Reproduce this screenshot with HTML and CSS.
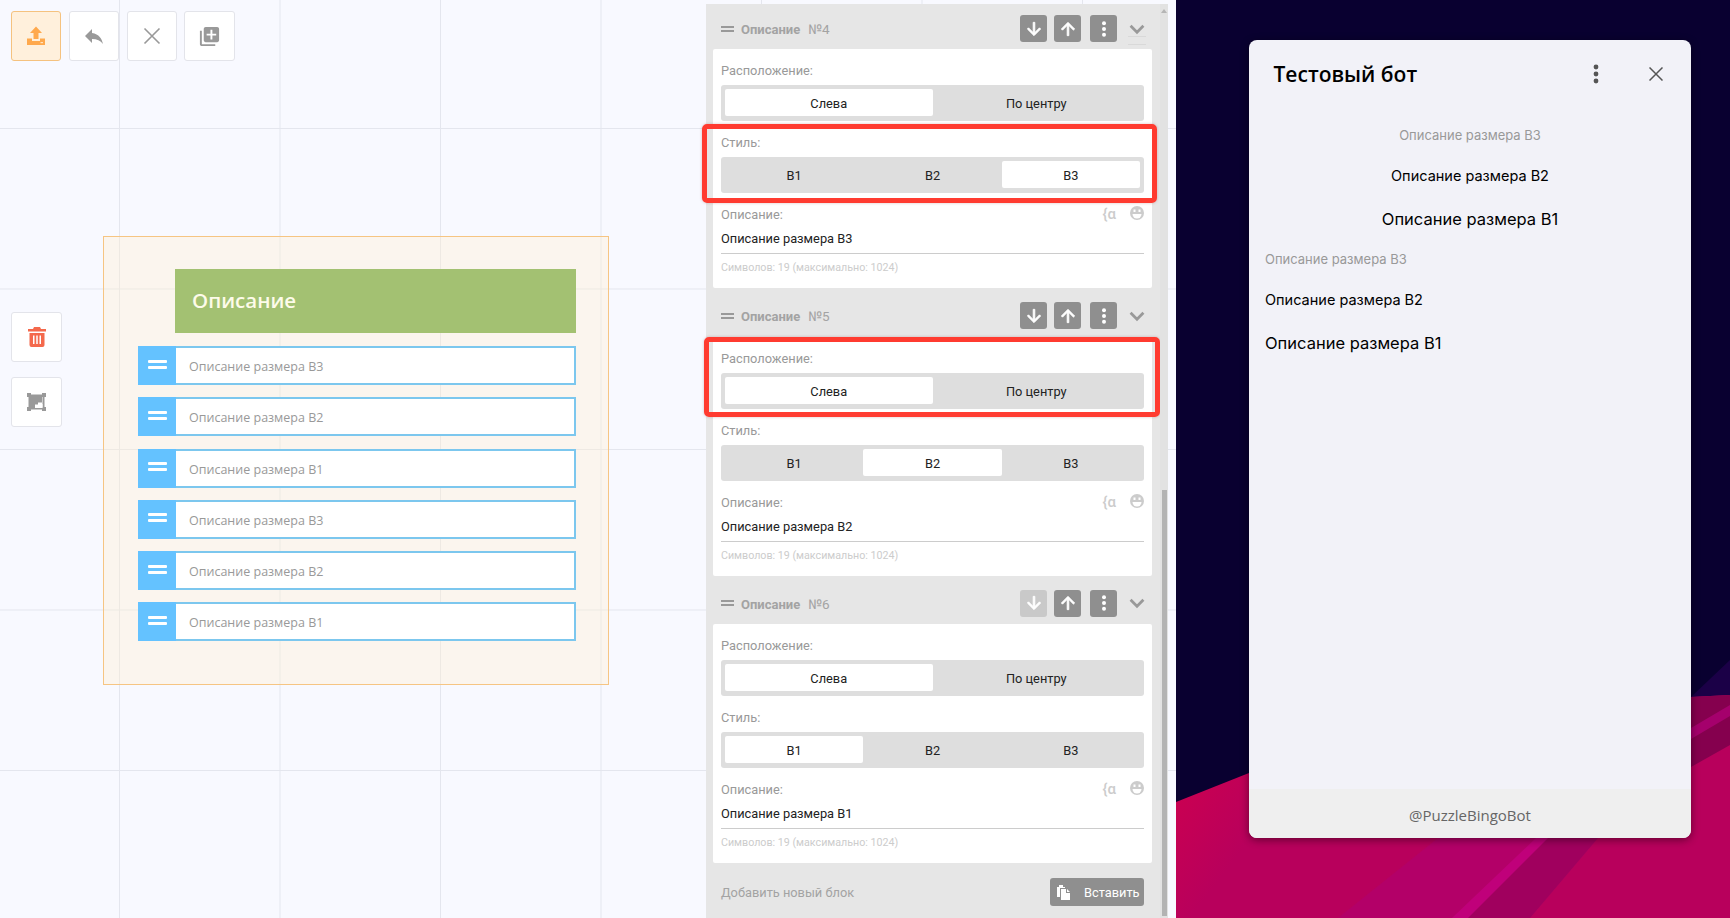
FILE: index.html
```html
<!DOCTYPE html>
<html lang="ru">
<head>
    <meta charset="UTF-8">
    <title>Тестовый бот</title>
    <link rel="stylesheet" href="styles.css">
</head>
<body>
    <div class="canvas">
        <div class="stage">
            <div class="toolbar">
                <button class="tool tool-active">
                    <svg width="20" height="20" viewBox="0 0 20 20"><path fill="#ffa94d" d="M10 0.500 16 7h-3.500v6h-5V7H4z"/><path fill="#ffa94d" d="M1 12.500h5V15h8v-2.500h5V19H1z"/><rect x="14.500" y="16" width="2.500" height="1.200" fill="#ffe3c2"/></svg>
                </button>
                <button class="tool">
                    <svg width="24" height="24" viewBox="0 0 24 24"><path fill="#999" d="M10 9V5l-7 7 7 7v-4.100c5 0 8.500 1.600 11 5.100-1-5-4-10-11-11z"/></svg>
                </button>
                <button class="tool">
                    <svg width="18" height="18" viewBox="0 0 18 18"><path stroke="#999" stroke-width="1.600" fill="none" d="M1.500 1.500l15 15M16.500 1.500l-15 15"/></svg>
                </button>
                <button class="tool tool-wide">
                    <svg width="23" height="23" viewBox="0 0 24 24"><path fill="#999" d="M4 6H2v14c0 1.100.9 2 2 2h14v-2H4V6zm16-4H8c-1.100 0-2 .9-2 2v12c0 1.100.9 2 2 2h12c1.100 0 2-.9 2-2V4c0-1.100-.9-2-2-2zm-1 9h-4v4h-2v-4H9V9h4V5h2v4h4v2z"/></svg>
                </button>
            </div>
            <div class="side-tools">
                <button class="tool">
                    <svg width="18" height="20" viewBox="0 0 18 20"><path fill="#f4694c" fill-rule="evenodd" d="M6 0h6l1 2h5v2.500H0V2h5zM1.500 6h15v12a2 2 0 0 1-2 2h-11a2 2 0 0 1-2-2zM5 8.500v8.500h1.500V8.500zM8.250 8.500v8.500h1.500V8.500zM11.500 8.500v8.500H13V8.500z"/></svg>
                </button>
                <button class="tool">
                    <svg width="19" height="18" viewBox="0 0 19 18"><path fill="#999" fill-rule="evenodd" d="M0 0h4v1.500h11V0h4v4h-1.500v10H19v4h-4v-1.500H4V18H0v-4h1.500V4H0zM11 9.500v2H8V15h7.500V4H15v5.500z"/><path fill="#fff" d="M9.500 12.500h4V11h2v3.500h-6z"/></svg>
                </button>
            </div>

            <div class="frame">
                <div class="frame-title">Описание</div>
                <div class="frame-rows">
                    <div class="frame-row"><span class="frame-handle"><i></i><i></i></span><span class="frame-text">Описание размера В3</span></div>
                    <div class="frame-row"><span class="frame-handle"><i></i><i></i></span><span class="frame-text">Описание размера В2</span></div>
                    <div class="frame-row"><span class="frame-handle"><i></i><i></i></span><span class="frame-text">Описание размера В1</span></div>
                    <div class="frame-row"><span class="frame-handle"><i></i><i></i></span><span class="frame-text">Описание размера В3</span></div>
                    <div class="frame-row"><span class="frame-handle"><i></i><i></i></span><span class="frame-text">Описание размера В2</span></div>
                    <div class="frame-row"><span class="frame-handle"><i></i><i></i></span><span class="frame-text">Описание размера В1</span></div>
                </div>
            </div>
        </div>

        <div class="panel">
            <div class="panel-list">
                <div class="block block-first">
                    <div class="block-head">
                        <span class="drag"><i></i><i></i></span>
                        <span class="block-name">Описание</span>
                        <span class="block-num">№4</span>
                        <span class="head-btn"><svg width="20" height="20" viewBox="0 0 24 24"><use href="#arrow-down"/></svg></span>
                        <span class="head-btn"><svg width="20" height="20" viewBox="0 0 24 24"><use href="#arrow-up"/></svg></span>
                        <span class="head-btn head-btn-more"><svg width="20" height="20" viewBox="0 0 24 24"><use href="#dots"/></svg></span>
                        <span class="chevron chevron-marked"><svg width="22" height="22" viewBox="0 0 24 24"><use href="#chevron"/></svg></span>
                    </div>
                    <div class="card">
                        <div class="section">
                            <div class="label">Расположение:</div>
                            <div class="seg"><span class="seg-item seg-on">Слева</span><span class="seg-item">По центру</span></div>
                        </div>
                        <div class="section">
                            <div class="mark mark-style"></div>
                            <div class="label">Стиль:</div>
                            <div class="seg"><span class="seg-item">В1</span><span class="seg-item">В2</span><span class="seg-item seg-on">В3</span></div>
                        </div>
                        <div class="section">
                            <div class="label-row">
                                <span class="label">Описание:</span>
                                <span class="var-icon">{α</span>
                                <svg class="smile" width="14" height="14" viewBox="0 0 14 14"><use href="#smile"/></svg>
                            </div>
                            <div class="field">Описание размера В3</div>
                            <div class="count">Символов: 19 (максимально: 1024)</div>
                        </div>
                    </div>
                </div>

                <div class="block">
                    <div class="block-head">
                        <span class="drag"><i></i><i></i></span>
                        <span class="block-name">Описание</span>
                        <span class="block-num">№5</span>
                        <span class="head-btn"><svg width="20" height="20" viewBox="0 0 24 24"><use href="#arrow-down"/></svg></span>
                        <span class="head-btn"><svg width="20" height="20" viewBox="0 0 24 24"><use href="#arrow-up"/></svg></span>
                        <span class="head-btn head-btn-more"><svg width="20" height="20" viewBox="0 0 24 24"><use href="#dots"/></svg></span>
                        <span class="chevron"><svg width="22" height="22" viewBox="0 0 24 24"><use href="#chevron"/></svg></span>
                    </div>
                    <div class="card">
                        <div class="section">
                            <div class="mark mark-place"></div>
                            <div class="label">Расположение:</div>
                            <div class="seg"><span class="seg-item seg-on">Слева</span><span class="seg-item">По центру</span></div>
                        </div>
                        <div class="section">
                            <div class="label">Стиль:</div>
                            <div class="seg"><span class="seg-item">В1</span><span class="seg-item seg-on">В2</span><span class="seg-item">В3</span></div>
                        </div>
                        <div class="section">
                            <div class="label-row">
                                <span class="label">Описание:</span>
                                <span class="var-icon">{α</span>
                                <svg class="smile" width="14" height="14" viewBox="0 0 14 14"><use href="#smile"/></svg>
                            </div>
                            <div class="field">Описание размера В2</div>
                            <div class="count">Символов: 19 (максимально: 1024)</div>
                        </div>
                    </div>
                </div>

                <div class="block">
                    <div class="block-head">
                        <span class="drag"><i></i><i></i></span>
                        <span class="block-name">Описание</span>
                        <span class="block-num">№6</span>
                        <span class="head-btn head-btn-off"><svg width="20" height="20" viewBox="0 0 24 24"><use href="#arrow-down"/></svg></span>
                        <span class="head-btn"><svg width="20" height="20" viewBox="0 0 24 24"><use href="#arrow-up"/></svg></span>
                        <span class="head-btn head-btn-more"><svg width="20" height="20" viewBox="0 0 24 24"><use href="#dots"/></svg></span>
                        <span class="chevron"><svg width="22" height="22" viewBox="0 0 24 24"><use href="#chevron"/></svg></span>
                    </div>
                    <div class="card">
                        <div class="section">
                            <div class="label">Расположение:</div>
                            <div class="seg"><span class="seg-item seg-on">Слева</span><span class="seg-item">По центру</span></div>
                        </div>
                        <div class="section">
                            <div class="label">Стиль:</div>
                            <div class="seg"><span class="seg-item seg-on">В1</span><span class="seg-item">В2</span><span class="seg-item">В3</span></div>
                        </div>
                        <div class="section">
                            <div class="label-row">
                                <span class="label">Описание:</span>
                                <span class="var-icon">{α</span>
                                <svg class="smile" width="14" height="14" viewBox="0 0 14 14"><use href="#smile"/></svg>
                            </div>
                            <div class="field">Описание размера В1</div>
                            <div class="count">Символов: 19 (максимально: 1024)</div>
                        </div>
                    </div>
                </div>

                <div class="panel-foot">
                    <span class="add-label">Добавить новый блок</span>
                    <button class="paste">
                        <svg width="14" height="15" viewBox="0 0 14 15"><path fill="#fff" d="M0 2h2V0h4v2h2v1H3v9H0z"/><path fill="#fff" d="M4 4h5v4h4v7H4zM10 4l3 3h-3z"/></svg>
                        Вставить
                    </button>
                </div>
            </div>
            <div class="scrollbar">
                <span class="scroll-arrow"></span>
                <span class="scroll-thumb"></span>
            </div>
        </div>
    </div>

    <div class="preview">
        <svg class="wallpaper" viewBox="1176 0 554 918" width="554" height="918">
            <defs>
                <linearGradient id="pink" x1="0" y1="0" x2="1" y2="0.300">
                    <stop offset="0" stop-color="#d6004a"/>
                    <stop offset="0.300" stop-color="#b8005c"/>
                    <stop offset="1" stop-color="#b8005c"/>
                </linearGradient>
            </defs>
            <rect x="1176" y="0" width="554" height="918" fill="#090030"/>
            <polygon points="1691,697 1730,660 1730,700" fill="#1b0047"/>
            <polygon points="1176,802 1249,773 1691,697 1730,695 1730,918 1176,918" fill="url(#pink)"/>
            <polygon points="1691,697 1730,695 1730,745 1691,767" fill="#85004e"/>
            <polygon points="1691,728 1730,705 1730,716 1691,739" fill="#a5006c"/>
            <polygon points="1438,838 1598,838 1530,918 1338,918" fill="#b30068"/>
            <polygon points="1545,838 1598,838 1530,918 1456,918" fill="#a0005e"/>
            <polygon points="1536,838 1548,838 1468,918 1452,918" fill="#c0007a"/>
        </svg>
        <div class="phone">
            <div class="phone-head">
                <span class="phone-title">Тестовый бот</span>
                <svg class="phone-dots" width="6" height="20" viewBox="0 0 6 20"><circle cx="3" cy="3" r="2.400" fill="#555"/><circle cx="3" cy="10" r="2.400" fill="#555"/><circle cx="3" cy="17" r="2.400" fill="#555"/></svg>
                <svg class="phone-close" width="14" height="14" viewBox="0 0 14 14"><path stroke="#555" stroke-width="1.500" fill="none" d="M0.500 0.500l13 13M13.500 0.500l-13 13"/></svg>
            </div>
            <div class="phone-body">
                <div class="msg msg-b3 msg-center">Описание размера В3</div>
                <div class="msg msg-b2 msg-center">Описание размера В2</div>
                <div class="msg msg-b1 msg-center">Описание размера В1</div>
                <div class="msg msg-b3">Описание размера В3</div>
                <div class="msg msg-b2">Описание размера В2</div>
                <div class="msg msg-b1">Описание размера В1</div>
            </div>
            <div class="phone-foot">@PuzzleBingoBot</div>
        </div>
    </div>

    <svg class="icon-defs" width="0" height="0">
        <defs>
            <path id="arrow-down" fill="#fff" stroke="#fff" stroke-width="1" d="M20 12l-1.410-1.410L13 16.170V4h-2v12.170l-5.580-5.590L4 12l8 8 8-8z"/>
            <path id="arrow-up" fill="#fff" stroke="#fff" stroke-width="1" d="M4 12l1.410 1.410L11 7.830V20h2V7.830l5.580 5.590L20 12l-8-8-8 8z"/>
            <g id="dots" fill="#fff"><circle cx="12" cy="5" r="2.400"/><circle cx="12" cy="12" r="2.400"/><circle cx="12" cy="19" r="2.400"/></g>
            <path id="chevron" fill="none" stroke="#999" stroke-width="3" d="M5 8.500l7 7 7-7"/>
            <g id="smile"><circle cx="7" cy="7" r="7" fill="#ccc"/><rect x="3.500" y="3.500" width="2" height="2.500" fill="#fff"/><rect x="8.500" y="3.500" width="2" height="2.500" fill="#fff"/><path fill="#fff" d="M2.500 8h9a4.500 4.500 0 0 1-9 0z"/></g>
        </defs>
    </svg>
</body>
</html>
```

FILE: styles.css
```css
* {
    box-sizing: border-box;
}
body {
    margin: 0;
    width: 1730px;
    height: 918px;
    overflow: hidden;
    display: flex;
    font-family: Roboto, "Open Sans", sans-serif;
    background-color: #f8f9ff;
}
button {
    font-family: inherit;
    padding: 0;
    cursor: pointer;
}
.icon-defs {
    position: absolute;
}

/* рабочая область с сеткой */
.canvas {
    width: 1176px;
    height: 918px;
    display: flex;
    background-color: #f8f9ff;
    background-image:
        linear-gradient(to right, #e4e6ee 1px, transparent 1px),
        linear-gradient(to bottom, #e4e6ee 1px, transparent 1px);
    background-size: 160.5px 160.5px;
    background-position: 119px 128px;
}
.stage {
    width: 706px;
    position: relative;
    padding: 11px 0 0 11px;
}
.toolbar {
    display: flex;
    gap: 8px;
}
.tool {
    width: 50px;
    height: 50px;
    display: flex;
    align-items: center;
    justify-content: center;
    background: #fff;
    border: 1px solid #e3e4ea;
    border-radius: 3px;
}
.tool-wide {
    width: 51px;
    margin-left: -1px;
}
.tool-active {
    background: #fff0dc;
    border-color: #f5c27f;
}
.side-tools {
    margin-top: 251px;
    display: flex;
    flex-direction: column;
    gap: 15px;
}
.side-tools .tool {
    width: 51px;
}

/* блок на холсте */
.frame {
    position: absolute;
    left: 103px;
    top: 236px;
    width: 506px;
    height: 449px;
    padding: 32px 32px 0 34px;
    border: 1px solid #f6c583;
    background: rgba(255, 240, 210, 0.38);
}
.frame-title {
    margin-left: 37px;
    height: 64px;
    padding: 0 0 3px 17px;
    display: flex;
    align-items: center;
    background: #a3c172;
    color: #fdfbe9;
    font-family: "Open Sans", sans-serif;
    font-size: 20.500px;
    font-weight: 600;
}
.frame-rows {
    margin-top: 13px;
    display: flex;
    flex-direction: column;
    gap: 12.3px;
}
.frame-row {
    height: 39px;
    display: flex;
    align-items: stretch;
    background: #fff;
    border: 2px solid #7cc7ee;
    border-left: 0;
}
.frame-handle {
    width: 38px;
    margin: -2px 0;
    display: flex;
    flex-direction: column;
    align-items: center;
    justify-content: center;
    gap: 3px;
    padding-bottom: 3px;
    background: #64c2ff;
}
.frame-handle i {
    width: 19px;
    height: 3px;
    background: #fff;
    border-radius: 1px;
}
.frame-text {
    padding: 2px 0 0 13px;
    align-self: center;
    font-family: "Open Sans", sans-serif;
    font-size: 12.5px;
    color: #999;
}

/* панель настроек */
.panel {
    width: 462px;
    height: 914px;
    margin-top: 4px;
    display: flex;
    background: #e6e6e6;
}
.panel-list {
    width: 454px;
    padding: 0 8px 0 7px;
}
.block-head {
    height: 48.7px;
    padding: 14px 0 0 8px;
    display: flex;
    align-items: flex-start;
}
.block-first .block-head {
    height: 45px;
    padding-top: 11px;
}
.drag {
    width: 13px;
    height: 27px;
    display: flex;
    flex-direction: column;
    justify-content: center;
    gap: 2px;
}
.drag i {
    height: 2px;
    background: #999;
}
.block-name {
    margin-left: 7px;
    line-height: 29px;
    font-size: 13px;
    font-weight: 700;
    color: #a3a3a3;
}
.block-num {
    margin-left: 8px;
    margin-right: auto;
    line-height: 29px;
    font-size: 13.500px;
    color: #a3a3a3;
}
.head-btn {
    width: 27px;
    height: 27px;
    margin-left: 7px;
    display: flex;
    align-items: center;
    justify-content: center;
    background: #8f8f8f;
    border-radius: 3px;
}
.head-btn-more {
    margin-left: 9px;
}
.head-btn-off {
    background: #c9c9c9;
}
.chevron {
    width: 22px;
    height: 27px;
    margin: 0 4px 0 9px;
    display: flex;
    align-items: center;
    justify-content: center;
    position: relative;
}
.chevron-marked::after {
    content: "";
    position: absolute;
    left: 2px;
    right: 2px;
    top: 21px;
    height: 7px;
    border-top: 1px solid #d9d9d9;
    border-bottom: 1px solid #d9d9d9;
}
.card {
    height: 239px;
    padding: 0 8px;
    background: #fff;
    border-radius: 2px;
}
.section {
    position: relative;
    padding-top: 12px;
}
.label {
    height: 18px;
    margin-bottom: 6px;
    line-height: 20px;
    font-size: 12.8px;
    color: #999;
}
.seg {
    height: 36px;
    padding: 4px;
    display: flex;
    background: #dedede;
    border-radius: 3px;
}
.seg-item {
    flex: 1;
    height: 27px;
    line-height: 29px;
    text-align: center;
    font-size: 12.8px;
    color: #222;
    border-radius: 2px;
}
.seg-on {
    background: #fff;
}
.mark {
    position: absolute;
    top: 3px;
    left: -19px;
    right: -13px;
    height: 79px;
    border: 5px solid #ff3b30;
    border-radius: 5px;
    box-shadow: 0 0 3px rgba(120, 0, 0, 0.25);
}
.mark-place {
    top: 0;
    left: -17px;
    right: -16px;
    height: 80px;
}
.label-row {
    height: 18px;
    display: flex;
    align-items: center;
}
.label-row .label {
    margin-bottom: 0;
    margin-right: auto;
}
.var-icon {
    margin-right: 14px;
    font-size: 15px;
    font-weight: 500;
    color: #ccc;
}
.smile {
    margin-top: -2px;
}
.field {
    height: 26px;
    margin-top: 5px;
    padding-bottom: 5px;
    line-height: 22px;
    font-size: 12.8px;
    color: #222;
    border-bottom: 1px solid #ccc;
}
.count {
    margin-top: 7px;
    line-height: 14px;
    font-size: 10.7px;
    color: #ccc;
}
.panel-foot {
    height: 50px;
    padding: 15px 0 0 8px;
    display: flex;
    align-items: flex-start;
    justify-content: space-between;
}
.add-label {
    line-height: 29px;
    font-size: 12.8px;
    color: #a3a3a3;
}
.paste {
    width: 94px;
    height: 28px;
    margin-right: 8px;
    display: flex;
    align-items: center;
    gap: 13px;
    padding-left: 7px;
    border: 0;
    border-radius: 3px;
    background: #8f8f8f;
    color: #fff;
    font-size: 12.8px;
}
.scrollbar {
    width: 8px;
    position: relative;
    background: #e2e2e2;
}
.scroll-arrow {
    position: absolute;
    left: 1px;
    top: 5px;
    border: 3px solid transparent;
    border-top: 0;
    border-bottom: 4px solid #b5b5b5;
}
.scroll-thumb {
    position: absolute;
    left: 1.500px;
    top: 486px;
    width: 5.500px;
    height: 426px;
    background: #b3b3b3;
}

/* предпросмотр */
.preview {
    flex: 1;
    position: relative;
    padding: 40px 0 0 73px;
}
.wallpaper {
    position: absolute;
    left: 0;
    top: 0;
}
.phone {
    position: relative;
    width: 442px;
    height: 798px;
    display: flex;
    flex-direction: column;
    background: #f2f2f8;
    border-radius: 8px;
    box-shadow: 0 2px 8px rgba(0, 0, 0, 0.45);
    overflow: hidden;
}
.phone-head {
    height: 77px;
    flex: none;
    padding: 0 28px 9px 24.500px;
    display: flex;
    align-items: center;
}
.phone-title {
    margin-right: auto;
    font-family: "Open Sans", sans-serif;
    font-size: 21px;
    font-weight: 600;
    color: #000;
}
.phone-close {
    margin-left: 50px;
}
.phone-body {
    flex: 1;
    padding: 0 16px;
}
.msg {
    font-family: Inter, sans-serif;
    color: #000;
}
.msg-center {
    text-align: center;
}
.msg-b1 {
    height: 44px;
    line-height: 44px;
    font-size: 16.500px;
}
.msg-b2 {
    height: 43px;
    line-height: 43px;
    font-size: 14.500px;
}
.msg-b3 {
    height: 37px;
    line-height: 37px;
    font-size: 13px;
    color: #999;
}
.phone-foot {
    height: 49px;
    flex: none;
    padding-top: 2px;
    display: flex;
    align-items: center;
    justify-content: center;
    background: #efefef;
    font-family: "Open Sans", sans-serif;
    font-size: 15px;
    color: #666;
}
```
